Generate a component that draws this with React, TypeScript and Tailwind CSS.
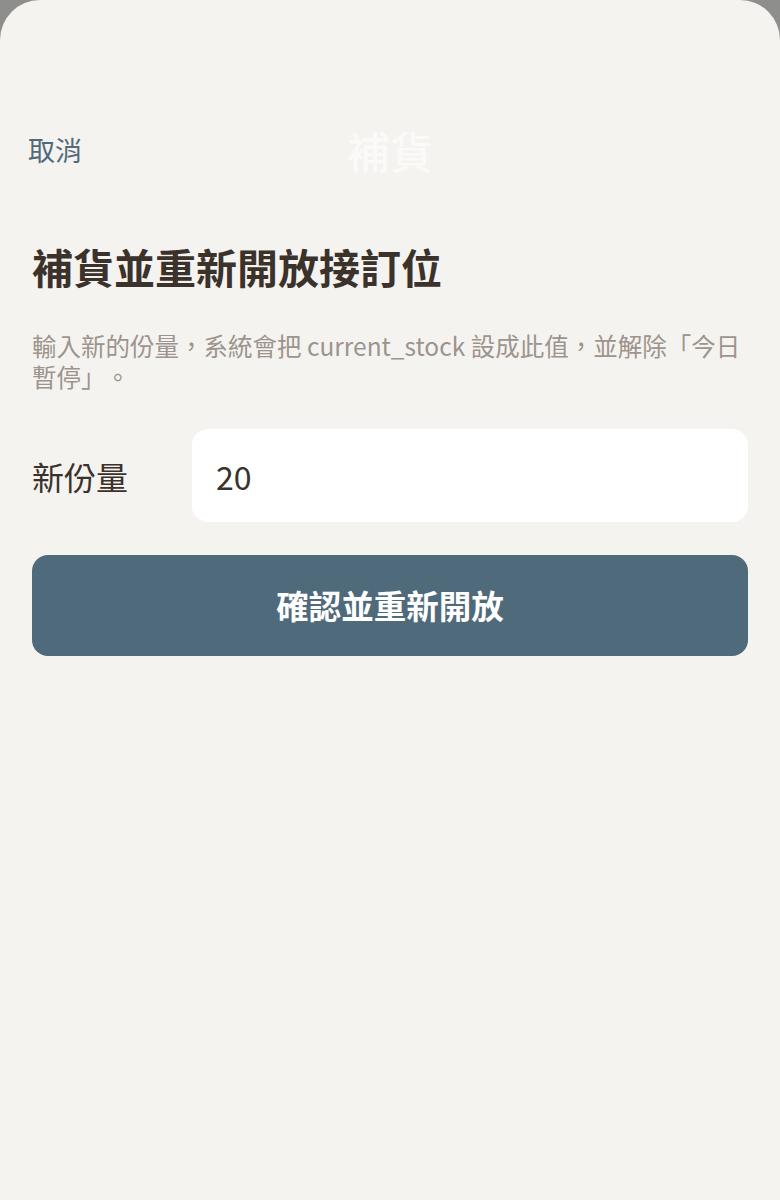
import React from 'react';

const FONT = { fontFamily: '"Noto Sans CJK TC", "Noto Sans", sans-serif' };

export default function App() {
  return (
    <div className="min-h-[1200px] w-[780px] bg-[#8e8e8c] [text-spacing-trim:space-all]" style={FONT}>
      <div className="flex h-[1200px] flex-col rounded-t-[40px] bg-[#f4f3f0]">
        {/* header */}
        <div className="relative mt-[110px] flex h-[80px] items-center px-[28px]">
          <button className="text-[27px] text-[#52697a]">取消</button>
          <div className="pointer-events-none absolute inset-x-0 top-0 flex h-full items-center justify-center">
            <span className="text-[43px] font-medium text-[#fbfaf8]">補貨</span>
          </div>
        </div>

        <div className="flex flex-col px-[32px]">
          <h1 className="mt-[48px] text-[41px] font-bold leading-[56px] text-[#3b322b]">補貨並重新開放接訂位</h1>
          <p className="mt-[36px] text-[24.5px] leading-[31px] text-[#9d948d]">
            輸入新的份量，系統會把 current_stock 設成此值，並解除「今日暫停」。
          </p>

          <div className="mt-[37px] flex items-center">
            <span className="w-[160px] text-[32px] text-[#3b322b]">新份量</span>
            <div className="flex h-[93px] flex-1 items-center rounded-[16px] bg-white px-[24px]">
              <span className="text-[32px] text-[#3b322b]">20</span>
            </div>
          </div>

          <button className="mt-[33px] flex h-[101px] items-center justify-center rounded-[16px] bg-[#4f6a7b] text-[32.5px] font-bold text-white">
            確認並重新開放
          </button>
        </div>
      </div>
    </div>
  );
}
